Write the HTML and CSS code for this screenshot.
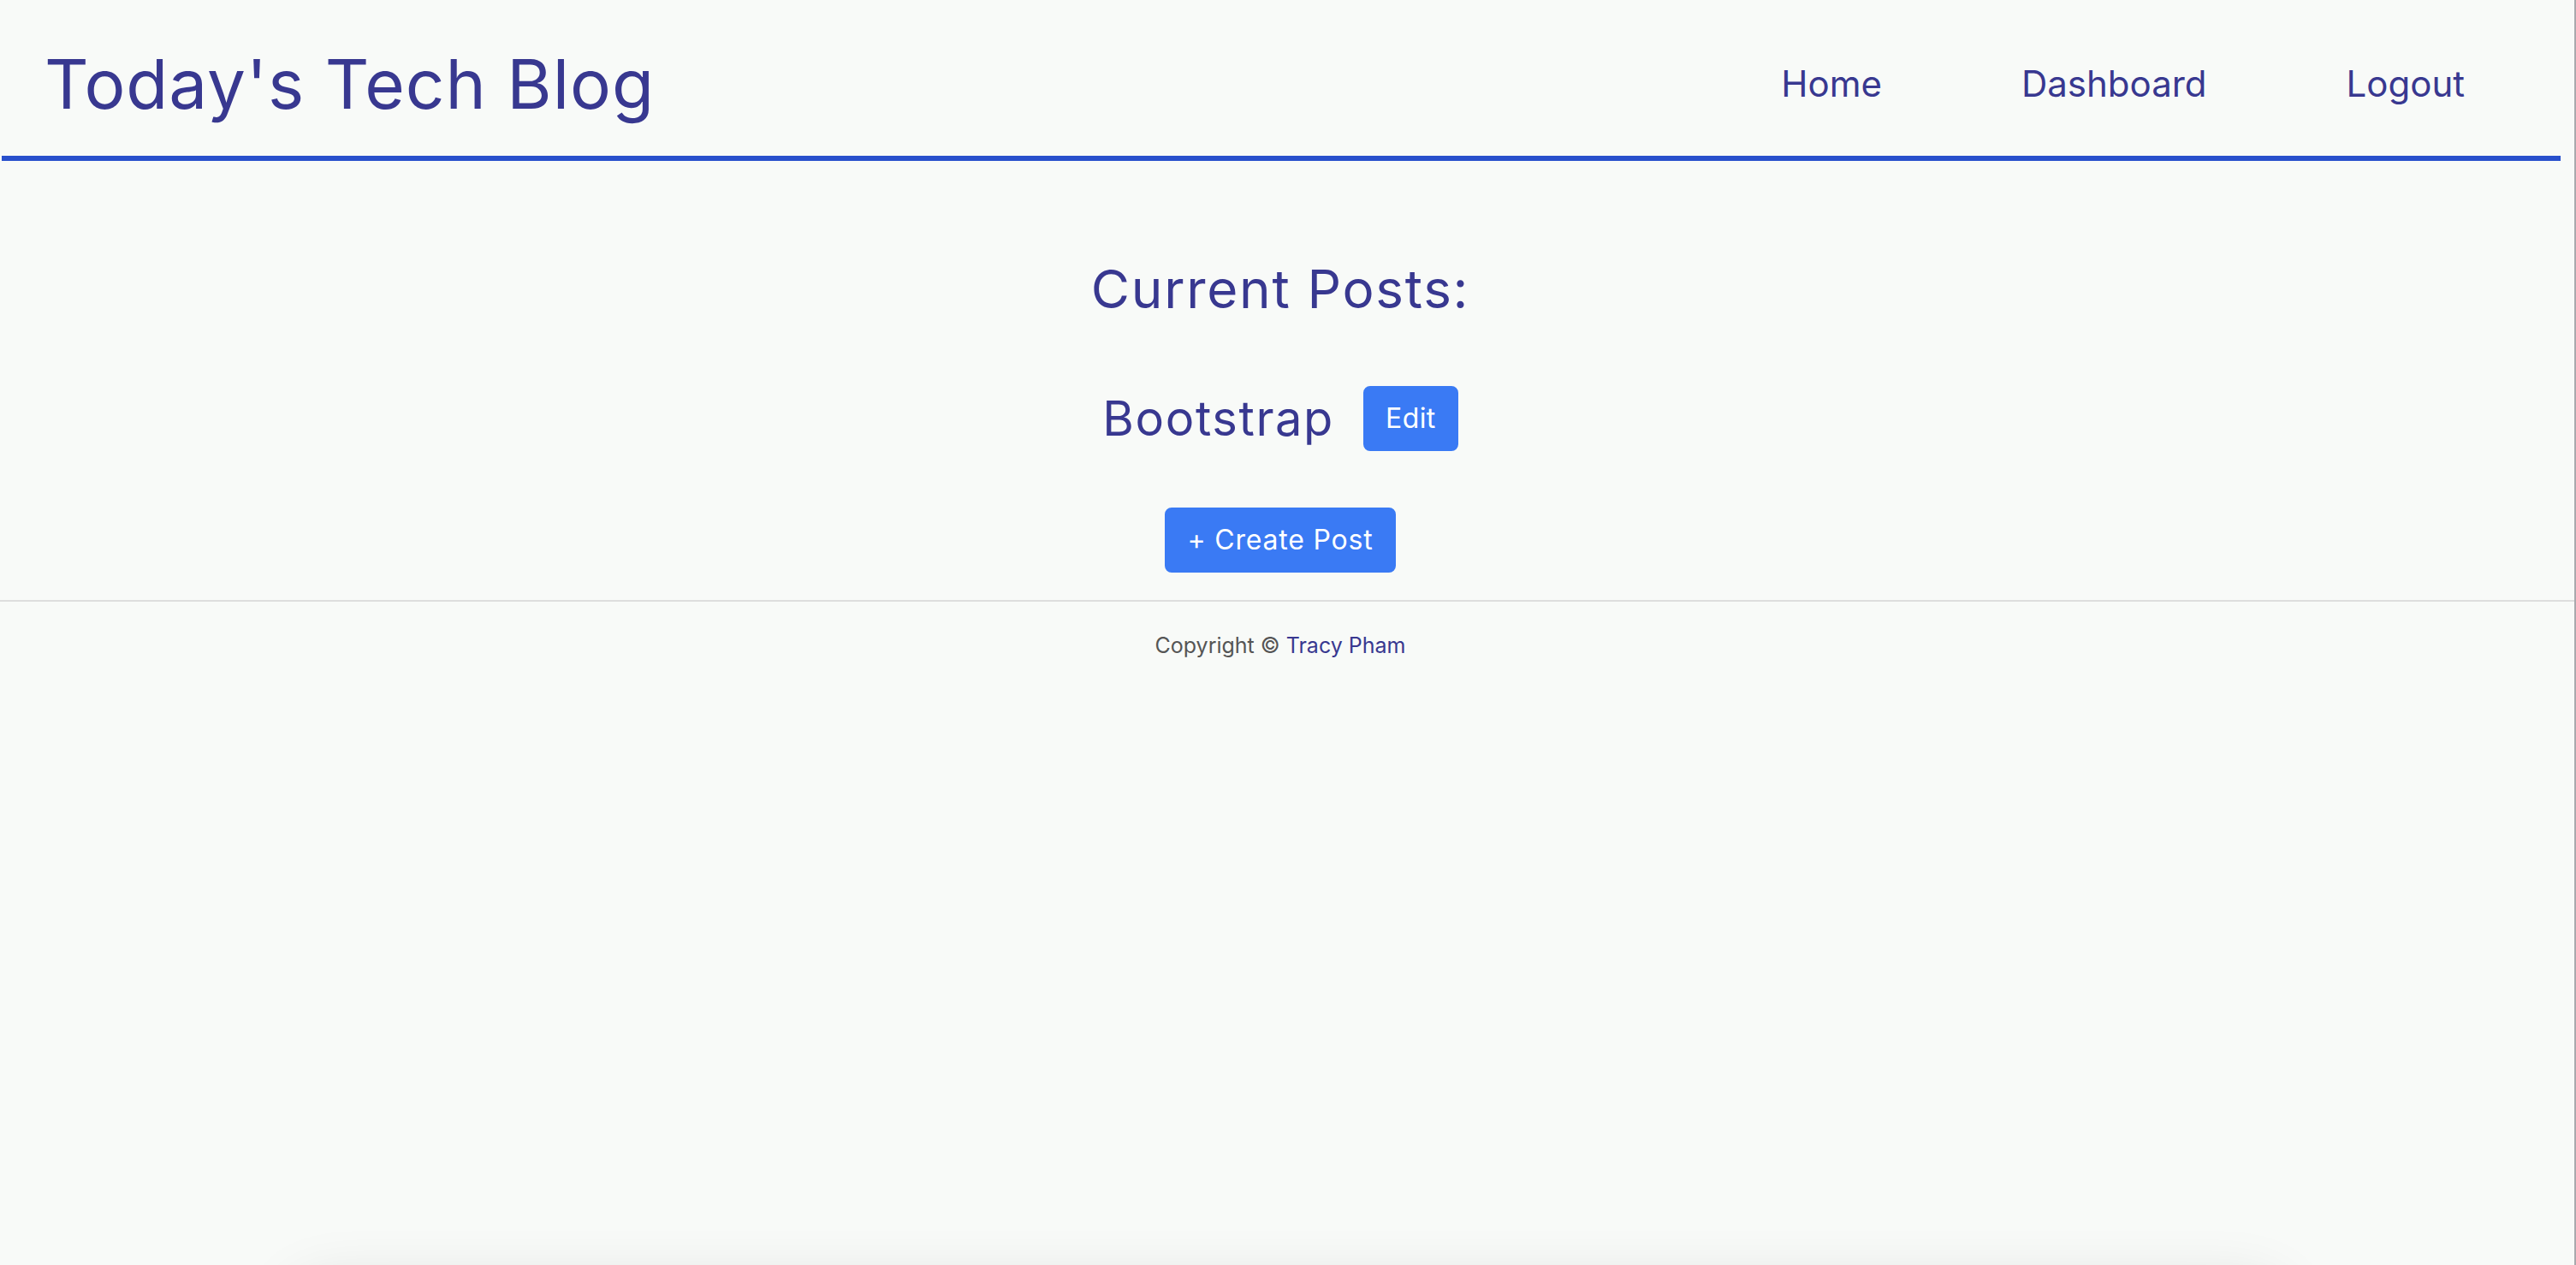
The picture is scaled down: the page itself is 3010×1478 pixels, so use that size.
FILE: index.html
```html
<!DOCTYPE html>
<html lang="en">
<head>
<meta charset="utf-8">
<title>Today's Tech Blog</title>
<link rel="stylesheet" href="styles.css">
</head>
<body>
<div class="page">
  <header class="site-header">
    <h1 class="brand">Today's Tech Blog</h1>
    <nav class="nav">
      <a class="nav-link" href="#">Home</a>
      <a class="nav-link" href="#">Dashboard</a>
      <a class="nav-link" href="#">Logout</a>
    </nav>
  </header>
  <main class="main">
    <h2 class="section-title">Current Posts:</h2>
    <div class="post-row">
      <h3 class="post-title">Bootstrap</h3>
      <a class="btn btn-edit" href="#">Edit</a>
    </div>
    <a class="btn btn-create" href="#">+ Create Post</a>
  </main>
  <footer class="site-footer">
    <p class="copy">Copyright © <a class="copy-link" href="#">Tracy Pham</a></p>
  </footer>
</div>
<div class="below-card"></div>
</body>
</html>
```

FILE: styles.css
```css
html, body {
  margin: 0;
  padding: 0;
  height: 100%;
  overflow: hidden;
}
body {
  background: #f8faf8;
  font-family: "Inter", "Noto Sans", sans-serif;
  color: #383890;
  border-right: 2px solid #a9a9ad;
  box-sizing: border-box;
}
.page {
  display: flex;
  flex-direction: column;
}
.site-header {
  display: flex;
  justify-content: space-between;
  align-items: center;
  height: 170px;
  margin: 0 16px 0 2px;
  border-bottom: 6px solid #2850cc;
  padding: 12px 112px 0 50px;
  box-sizing: content-box;
}
.brand {
  margin: 0;
  font-size: 80px;
  font-weight: 400;
  color: #383890;
  letter-spacing: 1px;
}
.nav {
  display: flex;
  gap: 163px;
}
.nav-link {
  font-size: 42px;
  color: #383890;
  text-decoration: none;
}
.main {
  display: flex;
  flex-direction: column;
  align-items: center;
  padding: 112px 16px 32px 0;
  border-bottom: 2px solid #dedede;
}
.section-title {
  margin: 0;
  font-size: 62px;
  font-weight: 400;
  color: #383890;
  letter-spacing: 1.7px;
}
.post-row {
  display: flex;
  align-items: center;
  gap: 34px;
  margin-top: 76px;
}
.post-title {
  margin: 0;
  font-size: 56px;
  font-weight: 400;
  color: #383890;
  letter-spacing: 1.6px;
}
.btn {
  display: inline-block;
  background: #3a7af4;
  color: #ffffff;
  font-size: 32px;
  line-height: 48px;
  padding: 12px 24px;
  border: 2px solid #3a7af4;
  border-radius: 8px;
  text-decoration: none;
  letter-spacing: 0.8px;
}
.btn-edit {
  letter-spacing: 0.4px;
}
.btn-create {
  margin-top: 66px;
}
.site-footer {
  display: flex;
  justify-content: center;
  padding-right: 16px;
}
.copy {
  margin: 36px 0 0;
  font-size: 25px;
  color: #555555;
}
.copy-link {
  color: #383890;
  text-decoration: none;
}
.below-card {
  position: fixed;
  left: 340px;
  right: 340px;
  top: 1500px;
  height: 200px;
  border-radius: 40px;
  background: #f8faf8;
  box-shadow: 0 0 70px rgba(0, 0, 0, 0.12);
}
```
